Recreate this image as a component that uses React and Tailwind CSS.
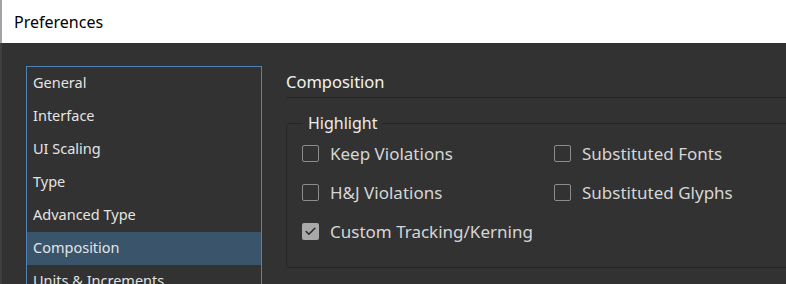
import { Check } from "lucide-react";

const SECTIONS = [
    "General",
    "Interface",
    "UI Scaling",
    "Type",
    "Advanced Type",
    "Composition",
    "Units & Increments",
];

const OPTIONS = [
    { label: "Keep Violations",         checked: false },
    { label: "Substituted Fonts",       checked: false },
    { label: "H&J Violations",          checked: false },
    { label: "Substituted Glyphs",      checked: false },
    { label: "Custom Tracking/Kerning", checked: true },
];

function CheckBox({ label, checked }) {
    return (
        <div className="h-[39px] flex items-center gap-[11px]">
            {checked ? (
                <span className="w-[17px] h-[17px] rounded-[2px] bg-[#a9a9a9] flex items-center justify-center">
                    <Check className="w-[13px] h-[13px] text-[#2b2b2b]" strokeWidth={3} />
                </span>
            ) : (
                <span className="w-[17px] h-[17px] rounded-[2px] border border-[#8c8c8c]" />
            )}
            <span className="text-[17px] text-[#d6d6d6] whitespace-nowrap">{label}</span>
        </div>
    );
}

export default function App() {
    const active = "Composition";

    return (
        <div className="w-[786px] h-[284px] overflow-hidden flex flex-col font-['Segoe_UI','Noto_Sans',sans-serif]">
            {/* Title bar */}
            <div className="h-[43px] shrink-0 bg-white border-l-2 border-[#a3a3a3] flex items-center pl-[12px]">
                <span className="text-[16px] text-black">Preferences</span>
            </div>

            {/* Body */}
            <div className="flex-1 bg-[#323232] border-l-2 border-[#3f3f3f] flex items-start pt-[23px] pl-[24px] gap-[24px]">
                {/* Section list */}
                <div className="w-[236px] shrink-0 border border-[#5283b6] pb-[40px]">
                    {SECTIONS.map((s) => (
                        <div
                            key={s}
                            className={`h-[33px] flex items-center pl-[6px] pb-[2px] text-[14.5px] text-[#e4e4e4] whitespace-nowrap
                                ${s === active ? "bg-[#3a546b]" : ""}`}
                        >
                            {s}
                        </div>
                    ))}
                </div>

                {/* Panel */}
                <div className="flex-1 min-w-0">
                    <div className="h-[32px] pt-[2px] border-b border-[#262626] flex items-center">
                        <span className="text-[16.5px] text-[#f2f2f2]">Composition</span>
                    </div>

                    <fieldset className="mt-[14px] w-[520px] border border-[#262626] rounded-[3px] pl-[15px] pb-[16px]">
                        <legend className="ml-[1px] px-[5px] text-[16px] leading-[22px] text-[#ececec]">Highlight</legend>
                        <div className="grid grid-cols-[252px_auto]">
                            {OPTIONS.map((o) => (
                                <CheckBox key={o.label} {...o} />
                            ))}
                        </div>
                    </fieldset>
                </div>
            </div>
        </div>
    );
}
